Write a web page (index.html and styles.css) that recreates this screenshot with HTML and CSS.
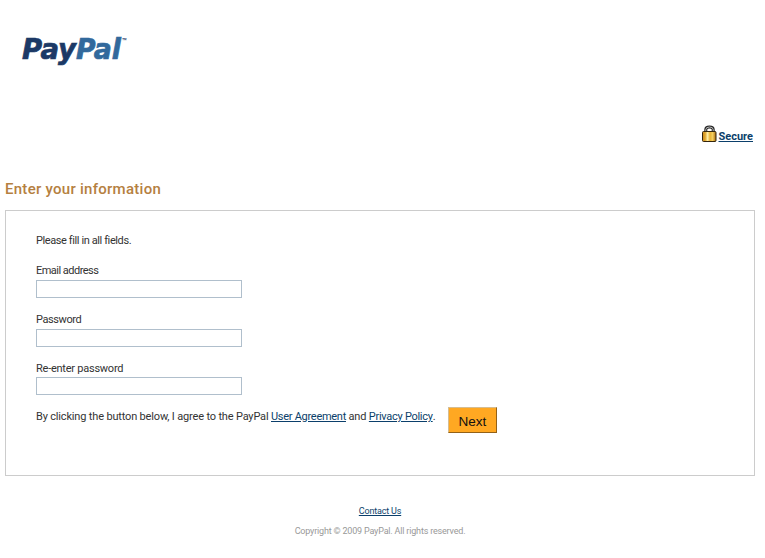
FILE: index.html
```html
<!DOCTYPE html>
<html lang="en">
<head>
<meta charset="utf-8">
<title>PayPal</title>
<link rel="stylesheet" href="styles.css">
</head>
<body>
<div class="page">
  <header class="header">
    <svg class="logo" width="116" height="40" viewBox="0 0 116 40" role="img" aria-label="PayPal">
      <text class="logo-word logo-dark" x="2" y="25" textLength="54" lengthAdjust="spacingAndGlyphs">Pay</text>
      <text class="logo-word logo-light" x="56" y="25" textLength="45" lengthAdjust="spacingAndGlyphs">Pal</text>
      <text class="logo-tm" x="102" y="9" textLength="5" lengthAdjust="spacingAndGlyphs">™</text>
    </svg>
  </header>
  <div class="secure">
    <svg class="lock" width="15" height="17" viewBox="0 0 15 17" aria-hidden="true">
      <defs>
        <linearGradient id="brass"><stop offset="0" stop-color="#c98a1c"/><stop offset=".2" stop-color="#e0a52c"/><stop offset=".38" stop-color="#fff0a8"/><stop offset=".55" stop-color="#e8b030"/><stop offset=".75" stop-color="#f6d060"/><stop offset="1" stop-color="#a8680c"/></linearGradient>
      </defs>
      <path d="M3.8 7V4.5Q3.8 2 7.5 2T11.2 4.5V7" fill="none" stroke="#222" stroke-width="3"/>
      <path d="M3.8 7V4.5Q3.8 2 7.5 2T11.2 4.5V7" fill="none" stroke="#bbb" stroke-width="1"/>
      <rect x=".5" y="6.5" width="13.5" height="10" rx="1" fill="url(#brass)" stroke="#33240c"/>
    </svg>
    <a href="#">Secure</a>
  </div>
  <h1>Enter your information</h1>
  <form class="panel">
    <p class="intro">Please fill in all fields.</p>
    <div class="field"><label class="l-email" for="email">Email address</label><input id="email" type="text"></div>
    <div class="field"><label class="l-pass" for="pw">Password</label><input id="pw" type="password"></div>
    <div class="field"><label class="l-again" for="pw2">Re-enter password</label><input id="pw2" type="password"></div>
    <div class="agree">
      <p>By clicking the button below, I agree to the PayPal <a href="#">User Agreement</a> and <a href="#">Privacy Policy</a>.</p>
      <button type="button">Next</button>
    </div>
  </form>
  <footer class="footer">
    <a href="#">Contact Us</a>
    <p>Copyright © 2009 PayPal. All rights reserved.</p>
  </footer>
</div>
</body>
</html>
```

FILE: styles.css
```css
* { box-sizing: border-box; }
body { margin: 0; background: #fff; color: #333; font: 11px/14px Roboto, "Liberation Sans", sans-serif; }
h1, p { margin: 0; }
a { color: #0b3f6b; text-decoration: underline; text-underline-offset: 1px; }
.page { width: 760px; padding: 0 5px; }
.header { height: 125px; padding: 34px 0 0 15px; }
.logo { display: block; }
.logo-word { font: italic bold 28px "DejaVu Sans", sans-serif; stroke-width: .7px; }
.logo-dark { fill: #1c3966; stroke: #1c3966; }
.logo-light { fill: #32699c; stroke: #32699c; }
.logo-tm { font: bold 7px "Liberation Sans", sans-serif; fill: #1c3966; }
.secure { display: flex; justify-content: flex-end; height: 55px; padding-right: 2px; gap: 2px; font-weight: 700; }
.secure a { margin-top: 5px; }
h1 { height: 30px; font-size: 15px; line-height: 18px; font-weight: 500; letter-spacing: .27px; color: #b5803f; }
.panel { height: 266px; padding: 23px 30px 0; border: 1px solid #ccc; }
.intro { margin-bottom: 16px; letter-spacing: -.4px; }
.field { height: 49px; }
.field label { display: block; height: 16px; }
.field .l-email { letter-spacing: -.52px; }
.field .l-pass { letter-spacing: -.4px; }
.field .l-again { height: 15px; letter-spacing: -.24px; }
.field input { display: block; width: 206px; height: 18px; margin: 0; padding: 1px 3px; border: 1px solid #b0bfcc; border-radius: 0; background: #fff; font: inherit; outline: 0; }
.agree { display: flex; gap: 12px; }
.agree p { width: 400px; margin-top: -1px; letter-spacing: -.17px; white-space: nowrap; }
.agree a { letter-spacing: -.28px; }
.agree button { width: 49px; height: 26px; margin-top: -4px; padding: 2px 0 0; border: 1px solid; border-color: #d5bd92 #936117 #936117 #d5bd92; border-radius: 0; background: #ffa822; color: #111; font: 13.5px "Liberation Sans", sans-serif; }
.footer { display: flex; flex-direction: column; align-items: center; padding-top: 29px; font-size: 9px; line-height: 12px; letter-spacing: -.18px; }
.footer p { margin-top: 8px; color: #999; }
```
